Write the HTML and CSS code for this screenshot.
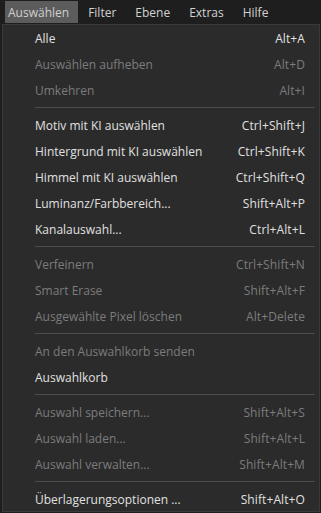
FILE: index.html
```html
<!DOCTYPE html>
<html lang="de">
<head>
  <meta charset="UTF-8">
  <title>Auswählen</title>
  <link rel="stylesheet" href="styles.css">
</head>
<body>
  <div class="menubar">
    <span class="menubar-item active">Auswählen</span>
    <span class="menubar-item">Filter</span>
    <span class="menubar-item">Ebene</span>
    <span class="menubar-item">Extras</span>
    <span class="menubar-item">Hilfe</span>
  </div>

  <div class="dropdown">
    <div class="item"><span>Alle</span><span class="key">Alt+A</span></div>
    <div class="item disabled"><span>Auswählen aufheben</span><span class="key">Alt+D</span></div>
    <div class="item disabled"><span>Umkehren</span><span class="key">Alt+I</span></div>
    <div class="sep"></div>
    <div class="item"><span>Motiv mit KI auswählen</span><span class="key">Ctrl+Shift+J</span></div>
    <div class="item"><span>Hintergrund mit KI auswählen</span><span class="key">Ctrl+Shift+K</span></div>
    <div class="item"><span>Himmel mit KI auswählen</span><span class="key">Ctrl+Shift+Q</span></div>
    <div class="item"><span>Luminanz/Farbbereich...</span><span class="key">Shift+Alt+P</span></div>
    <div class="item"><span>Kanalauswahl...</span><span class="key">Ctrl+Alt+L</span></div>
    <div class="sep"></div>
    <div class="item disabled"><span>Verfeinern</span><span class="key">Ctrl+Shift+N</span></div>
    <div class="item disabled"><span>Smart Erase</span><span class="key">Shift+Alt+F</span></div>
    <div class="item disabled"><span>Ausgewählte Pixel löschen</span><span class="key">Alt+Delete</span></div>
    <div class="sep"></div>
    <div class="item disabled"><span>An den Auswahlkorb senden</span></div>
    <div class="item"><span>Auswahlkorb</span></div>
    <div class="sep"></div>
    <div class="item disabled"><span>Auswahl speichern...</span><span class="key">Shift+Alt+S</span></div>
    <div class="item disabled"><span>Auswahl laden...</span><span class="key">Shift+Alt+L</span></div>
    <div class="item disabled"><span>Auswahl verwalten...</span><span class="key">Shift+Alt+M</span></div>
    <div class="sep"></div>
    <div class="item"><span>Überlagerungsoptionen ...</span><span class="key">Shift+Alt+O</span></div>
  </div>
</body>
</html>
```

FILE: styles.css
```css
body {
  margin: 0;
  padding: 0;
  background-color: #1e1e1e;
  font-family: "Open Sans", "Noto Sans", sans-serif;
  font-size: 12px;
  color: #e0e0e0;
}

.menubar {
  display: flex;
  gap: 7px;
  height: 24px;
  padding: 1px 0 0 5px;
  box-sizing: border-box;
}

.menubar-item {
  display: flex;
  align-items: center;
  height: 22px;
  padding: 0 9px 0 3px;
  color: #d2d2d2;
}

.menubar-item.active {
  background-color: #5c5c5c;
  color: #cfcfcf;
}

.dropdown {
  margin-left: 2px;
  width: 318px;
  height: 488px;
  box-sizing: border-box;
  background-color: #2b2b2b;
  border: 1px solid #3a3a3a;
  padding: 0 14px 0 32px;
}

.item {
  display: flex;
  justify-content: space-between;
  align-items: center;
  height: 26px;
}

.item.disabled {
  color: #7c7c7c;
}

.key {
  letter-spacing: 0.1px;
}

.sep {
  height: 1px;
  background-color: #4c4c4c;
  margin: 4px -10px 4px 0;
}
```
